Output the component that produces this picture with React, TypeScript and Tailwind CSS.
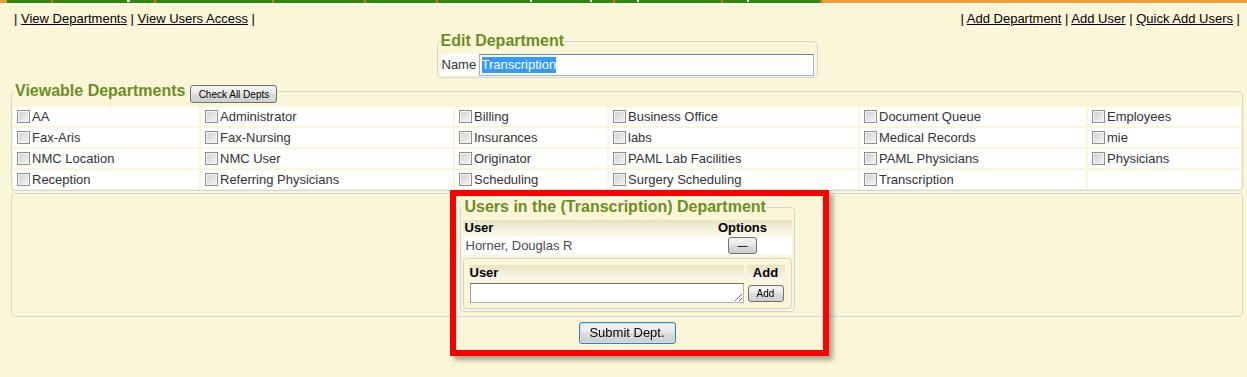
const rows = [
  ["AA", "Administrator", "Billing", "Business Office", "Document Queue", "Employees"],
  ["Fax-Aris", "Fax-Nursing", "Insurances", "labs", "Medical Records", "mie"],
  ["NMC Location", "NMC User", "Originator", "PAML Lab Facilities", "PAML Physicians", "Physicians"],
  ["Reception", "Referring Physicians", "Scheduling", "Surgery Scheduling", "Transcription", ""],
]

const btn =
  "border border-[#707070] rounded-[3px] bg-[linear-gradient(#f3f3f3,#ebebeb_45%,#dddddd_50%,#cfcfcf)] text-black flex items-center justify-center"

function Checkbox() {
  return (
    <span className="inline-block w-[13px] h-[13px] shrink-0 border border-[#8e8f8f] bg-[linear-gradient(135deg,#cfcfcf,#f6f6f6)] shadow-[inset_0_0_0_1px_#f4f4f4]" />
  )
}

function TopBar() {
  return (
    <div>
      <div className="flex h-[3px] bg-[#f39c33]">
        <div className="w-[7px]" />
        <div className="w-[46px] bg-[#2b8a0b] border-r-2 border-r-[#c9781a]" />
        <div className="w-[103px] bg-[#2b8a0b] border-r-2 border-r-[#c9781a] flex justify-end pr-[24px]">
          <span className="w-[3px] h-[2px] bg-white" />
        </div>
        <div className="w-[118px] bg-[#2b8a0b] border-r-2 border-r-[#c9781a]" />
        <div className="w-[92px] bg-[#2b8a0b] border-r-2 border-r-[#c9781a]" />
        <div className="w-[72px] bg-[#2b8a0b] border-r-2 border-r-[#c9781a]" />
        <div className="w-[177px] bg-[#2b8a0b] border-r-2 border-r-[#c9781a] flex pl-[92px] gap-[58px]">
          <span className="w-[2px] h-[2px] bg-white" />
          <span className="w-[2px] h-[2px] bg-white" />
        </div>
        <div className="w-[108px] bg-[#2b8a0b] border-r-2 border-r-[#c9781a] flex pl-[22px]">
          <span className="w-[2px] h-[2px] bg-white" />
        </div>
        <div className="w-[99px] bg-[#2b8a0b] border-r-2 border-r-[#c9781a] flex pl-[24px]">
          <span className="w-[2px] h-[2px] bg-white" />
        </div>
      </div>
      <div className="h-[2px] bg-[#fdfaeb]" />
    </div>
  )
}

function Links({ items }: { items: string[] }) {
  return (
    <div>
      {"| "}
      {items.map((t) => (
        <span key={t}>
          <a className="underline text-black">{t}</a>
          {" | "}
        </span>
      ))}
    </div>
  )
}

export default function App() {
  return (
    <div className="relative w-[1247px] h-[377px] overflow-hidden bg-[#fcf6d9] font-['Liberation_Sans',Arial,sans-serif] text-[13px] text-[#333]">
      <TopBar />
      <div className="pl-[11px] w-[1243px]">
        <div className="mt-[6px] h-[15px] leading-[15px] flex justify-between px-[3px] text-black">
          <Links items={["View Departments", "View Users Access"]} />
          <Links items={["Add Department", "Add User", "Quick Add Users"]} />
        </div>

        <fieldset className="mx-auto mt-[6px] w-[381px] border border-[#d0d5db] rounded-[4px] px-[3px] pt-[4px] pb-[1px]">
          <legend className="text-[16px] leading-[18px] font-bold text-[#6b8e23]">Edit Department</legend>
          <div className="flex h-[22px]">
            <div className="w-[37px] h-[21px] bg-white flex items-center pl-[1px]">Name</div>
            <div className="ml-[1px] w-[335px] h-[22px] bg-white border border-[#9ab7da] border-t-[#5d88b6] flex items-center pl-[2px]">
              <span className="bg-[#3399ff] text-white leading-[16px]">Transcription</span>
            </div>
          </div>
        </fieldset>

        <fieldset className="mt-[4px] border border-[#d0d5db] rounded-[4px] px-[1px] pt-[7px] pb-[1px]">
          <legend className="ml-[2px] h-[18px] flex items-start gap-[5px]">
            <span className="text-[16px] leading-[18px] font-bold text-[#6b8e23]">Viewable Departments</span>
            <button className={`${btn} mt-[3px] w-[87px] h-[18px] text-[10px]`}>Check All Depts</button>
          </legend>
          <div className="grid grid-cols-[186px_252px_152px_249px_226px_153px] gap-[2px]">
            {rows.flat().map((d, i) => (
              <div key={i} className="h-[19px] bg-white flex items-center pl-[4px] gap-[2px] leading-[15px]">
                {d && <Checkbox />}
                {d && <span>{d}</span>}
              </div>
            ))}
          </div>
        </fieldset>

        <div className="mt-[2px] border border-[#d0d5db] rounded-[4px] pt-[4px] pb-[4px]">
          <fieldset className="mx-auto w-[335px] border border-[#d0d5db] rounded-[4px] px-[2px] pt-[4px] pb-[2px]">
            <legend className="ml-[2px] text-[16px] leading-[18px] font-bold text-[#6b8e23]">
              Users in the (Transcription) Department
            </legend>
            <div className="flex h-[15px] leading-[15px] font-bold text-black bg-[linear-gradient(#ebe3c3,#fbf8ec)]">
              <div className="flex-1 pl-[2px]">User</div>
              <div className="w-[98px] text-center">Options</div>
            </div>
            <div className="mt-[1px] flex h-[19px] items-center bg-white">
              <div className="flex-1 pl-[3px] text-[#4a4a4a]">Horner, Douglas R</div>
              <div className="w-[98px] flex justify-center">
                <button className={`${btn} w-[29px] h-[17px] text-[10px] leading-[10px]`}>—</button>
              </div>
            </div>
            <fieldset className="mt-[3px] border border-[#d0d5db] rounded-[4px] pl-[5px] pr-[5px] pt-[6px] pb-[5px]">
              <div className="flex gap-[3px] h-[15px] leading-[15px] font-bold text-black">
                <div className="w-[275px] pl-[1px] bg-[linear-gradient(#ebe3c3,#fbf8ec)]">User</div>
                <div className="w-[38px] text-center bg-[linear-gradient(#ebe3c3,#fbf8ec)]">Add</div>
              </div>
              <div className="mt-[3px] flex gap-[3px] h-[20px]">
                <textarea className="ml-[1px] w-[274px] h-[20px] bg-white border border-[#b5b5b5] border-t-[#6f6f6f] border-l-[#9a9a9a] resize-y outline-none" />
                <div className="w-[38px] flex justify-center items-center">
                  <button className={`${btn} w-[36px] h-[17px] text-[10px]`}>Add</button>
                </div>
              </div>
            </fieldset>
          </fieldset>
        </div>

        <div className="mt-[5px] flex justify-center">
          <button className="w-[97px] h-[22px] rounded-[3px] border border-[#3c7fb1] shadow-[inset_0_0_0_1px_#bfe4f7] bg-[linear-gradient(#f2f2f2,#ebebeb_45%,#dddddd_50%,#cfcfcf)] text-black text-[13px]">
            Submit Dept.
          </button>
        </div>
      </div>

      <div className="absolute left-[450px] top-[190px] w-[379px] h-[166px] border-[6px] border-[#ff0000] shadow-[4px_4px_5px_rgba(0,0,0,0.35)] pointer-events-none" />
    </div>
  )
}
